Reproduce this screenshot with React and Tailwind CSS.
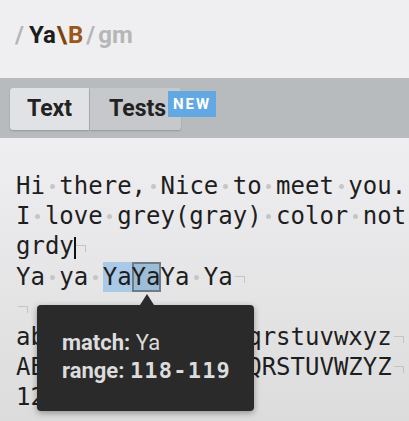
import React from 'react';

const mono = { fontFamily: '"DejaVu Sans Mono", monospace' };
const sans = { fontFamily: 'Roboto, sans-serif' };

function Sp() {
  return (
    <span className="relative inline-block w-[1ch] h-[14px]">
      <span className="absolute left-1/2 bottom-[5px] -ml-[2.5px] w-[5px] h-[5px] rounded-full bg-[#c6c6c6]" />
    </span>
  );
}

function Eol() {
  return (
    <span className="relative inline-block w-[1ch] h-[14px]">
      <span className="absolute left-[2px] bottom-[2px] w-[10px] h-[7px] border-t-[1.5px] border-r-[1.5px] border-[#c4c4c4]" />
    </span>
  );
}

function Words({ text, eol = true }) {
  const parts = text.split(' ');
  return (
    <>
      {parts.map((p, i) => (
        <React.Fragment key={i}>
          {i > 0 && <Sp />}
          {p}
        </React.Fragment>
      ))}
      {eol && <Eol />}
    </>
  );
}

export default function App() {
  return (
    <div className="w-[409px] h-[421px] overflow-hidden bg-[#efeff1]">
      {/* expression */}
      <div className="h-[78px] pl-[15px] pt-[20px] text-[24px] font-bold leading-[30px]" style={sans}>
        <span className="text-[#b6b6b6]">/</span>
        <span className="text-[#1c1c1c] ml-[5px]">Ya</span>
        <span className="text-[#7e4210] ml-[1px]">\</span>
        <span className="text-[#9c5617] ml-[1px]">B</span>
        <span className="text-[#b6b6b6] ml-[3px]">/</span>
        <span className="text-[#b6b6b6] ml-[3px]">gm</span>
      </div>

      {/* tabs */}
      <div className="h-[60px] bg-[#b8bbbe] pl-[10px] pt-[10px] flex items-start" style={sans}>
        <div className="h-[42px] w-[79px] bg-[#e1e2e5] rounded-l-[3px] shadow-[0_1px_2px_rgba(0,0,0,0.2)] flex items-center justify-center text-[23px] font-bold text-[#222]">
          Text
        </div>
        <div className="h-[42px] w-[91px] ml-px bg-[#c6c8cc] rounded-r-[3px] shadow-[0_1px_2px_rgba(0,0,0,0.2)] flex items-center pl-[19px] text-[23px] font-bold text-[#222]">
          Tests
        </div>
        <div className="-ml-[13px] mt-[3px] h-[26px] w-[48px] bg-[#62a8e2] text-white text-[15px] font-bold tracking-[2px] flex items-center justify-center">
          NEW
        </div>
      </div>

      {/* editor */}
      <div className="relative h-[283px] bg-gradient-to-b from-[#efeff1] to-[#dcdcdd] pl-[16px] pt-[33px] text-[24px] leading-[30.2px] text-[#1e1e1e] whitespace-pre" style={mono}>
        <div><Words text="Hi there, Nice to meet you." eol={false} /></div>
        <div><Words text="I love grey(gray) color not" eol={false} /></div>
        <div>
          grdy
          <span className="inline-block w-[2px] h-[22px] -mr-[2px] bg-[#111] align-[-5px]" />
          <Eol />
        </div>
        <div>
          Ya<Sp />ya<Sp />
          <span className="inline-block bg-[#a9c9e6]">
            Ya
            <span className="inline-block bg-[#9dbcd8] shadow-[inset_0_0_0_2px_#6c7c89]">Ya</span>
          </span>
          Ya<Sp />Ya<Eol />
        </div>
        <div><Eol /></div>
        <div><Words text="abcdefghijklmnopqrstuvwxyz" /></div>
        <div><Words text="ABCDEFGHIJKLMNOPQRSTUVWZYZ" /></div>
        <div><Words text="1234567890" /></div>

        {/* tooltip */}
        <div className="absolute left-[37px] top-[167px] w-[217px] h-[106px] bg-[#2a2a2a] rounded-[4px] shadow-[0_2px_6px_rgba(0,0,0,0.35)] pl-[25px] pt-[24px] text-[#dcdcdc] whitespace-nowrap" style={sans}>
          <div className="absolute -top-[11px] left-[103px] w-0 h-0 border-x-[7px] border-x-transparent border-b-[11px] border-b-[#2a2a2a]" />
          <div className="text-[22px] leading-[28px]">
            <span className="font-bold">match:</span> Ya
          </div>
          <div className="text-[22px] leading-[28px]">
            <span className="font-bold">range:</span>{' '}
            <span className="font-bold text-[22px] tracking-[1.2px]" style={mono}>118-119</span>
          </div>
        </div>
      </div>
    </div>
  );
}
